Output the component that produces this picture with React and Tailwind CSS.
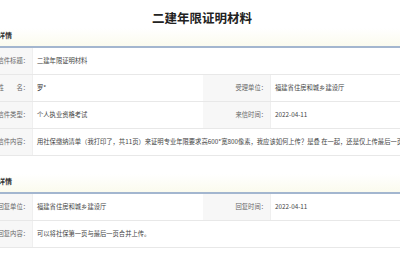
import React from 'react';

const letter = {
  title: '二建年限证明材料',
  name: '罗*',
  dept: '福建省住房和城乡建设厅',
  type: '个人执业资格考试',
  date: '2022-04-11',
  content:
    '用社保缴纳清单（我打印了，共11页）来证明专业年限要求高600*宽800像素，我应该如何上传？是叠 在一起，还是仅上传最后一页',
};

const reply = {
  dept: '福建省住房和城乡建设厅',
  date: '2022-04-11',
  content: '可以将社保第一页与最后一页合并上传。',
};

const Label = ({ children }) => (
  <div className="flex items-center justify-end overflow-hidden whitespace-nowrap bg-[#f7f7f7] pr-[3px] text-[#666] border-r border-[#efefef]">
    {children}
  </div>
);

const Value = ({ children, span }) => (
  <div
    className={`flex items-center overflow-hidden whitespace-nowrap pl-[4px] text-[#444] ${
      span ? 'col-span-3' : ''
    }`}
  >
    {children}
  </div>
);

const Row = ({ children }) => (
  <div className="grid h-[27px] grid-cols-[33px_170px_68px_1fr] border-b border-[#e8e8e8]">
    {children}
  </div>
);

const SectionHeader = ({ text }) => (
  <div className="flex h-[20px] items-center overflow-hidden border-b-2 border-[#a3b6cf] bg-gradient-to-b from-white to-[#fbfbee] pb-[3px]">
    <span className="-ml-[16px] whitespace-nowrap text-[7px] font-bold text-[#333]">{text}</span>
  </div>
);

export default function App() {
  return (
    <div className="h-[260px] w-[400px] overflow-hidden bg-white font-['Noto_Sans_CJK_SC',sans-serif] text-[6.3px]">
      <h1 className="h-[28px] pt-[8px] pl-[4px] text-center text-[12.5px] font-bold leading-[20px] text-[#222]">
        {letter.title}
      </h1>

      <SectionHeader text="来信详情" />
      <Row>
        <Label>信件标题：</Label>
        <Value span>{letter.title}</Value>
      </Row>
      <Row>
        <Label>姓　　名：</Label>
        <Value>{letter.name}</Value>
        <Label>受理单位：</Label>
        <Value>{letter.dept}</Value>
      </Row>
      <Row>
        <Label>信件类型：</Label>
        <Value>{letter.type}</Value>
        <Label>来信时间：</Label>
        <Value>{letter.date}</Value>
      </Row>
      <Row>
        <Label>信件内容：</Label>
        <Value span>{letter.content}</Value>
      </Row>

      <div className="mt-[18px]">
        <SectionHeader text="回复详情" />
        <Row>
          <Label>回复单位：</Label>
          <Value>{reply.dept}</Value>
          <Label>回复时间：</Label>
          <Value>{reply.date}</Value>
        </Row>
        <Row>
          <Label>回复内容：</Label>
          <Value span>{reply.content}</Value>
        </Row>
      </div>
    </div>
  );
}
